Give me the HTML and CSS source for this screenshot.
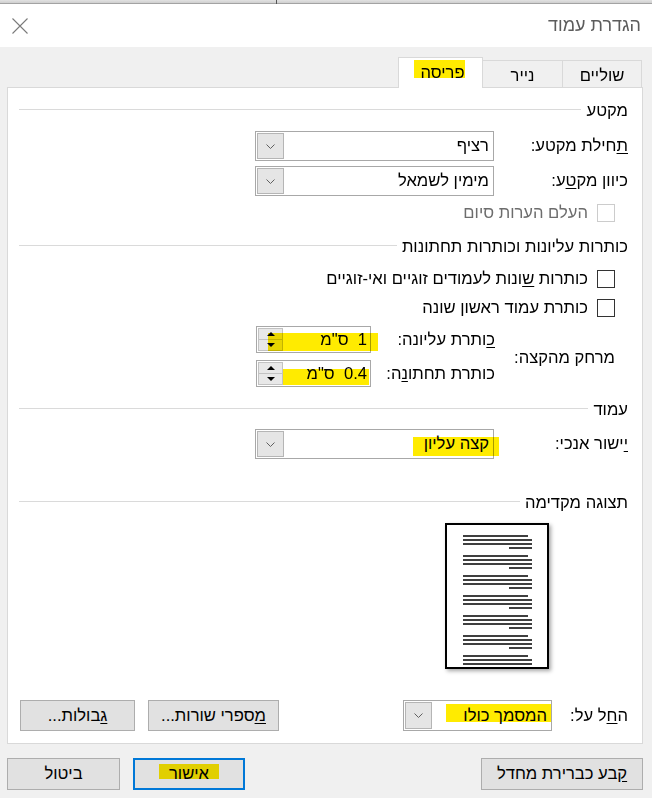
FILE: index.html
```html
<!DOCTYPE html>
<html lang="he" dir="rtl">
<head>
<meta charset="utf-8">
<title>הגדרת עמוד</title>
<link rel="stylesheet" href="styles.css">
</head>
<body>
<div class="topstrip"><span class="tick"></span></div>
<div class="titlebar">
  <span class="title">הגדרת עמוד</span>
  <svg class="close" width="16" height="16" viewBox="0 0 16 16"><path d="M0.5 0.5L15.5 15.5M15.5 0.5L0.5 15.5" stroke="#7a7a7a" stroke-width="1.1" fill="none"/></svg>
</div>
<div class="tabs">
  <div class="tab t1">שוליים</div>
  <div class="tab t2">נייר</div>
  <div class="tab active">פריסה<span class="hl hl-tab"></span></div>
</div>
<div class="panel">
  <div class="heading hd1"><span>מקטע</span><i class="rule"></i></div>
  <div class="frow r1">
    <span class="flabel"><u>ת</u>חילת מקטע:</span>
    <div class="select wide"><span class="value">רציף</span><span class="dd"><svg width="9" height="5" viewBox="0 0 9 5"><path d="M0.5 0.5L4.5 4.5L8.5 0.5" stroke="#606060" fill="none"/></svg></span></div>
  </div>
  <div class="frow r2">
    <span class="flabel">כיוון מק<u>ט</u>ע:</span>
    <div class="select wide"><span class="value">מימין לשמאל</span><span class="dd"><svg width="9" height="5" viewBox="0 0 9 5"><path d="M0.5 0.5L4.5 4.5L8.5 0.5" stroke="#606060" fill="none"/></svg></span></div>
  </div>
  <div class="cbrow c0"><span class="cb disabled"></span><span class="dis">העלם הערות סיום</span></div>

  <div class="heading hd2"><span>כותרות עליונות וכותרות תחתונות</span><i class="rule"></i></div>
  <div class="cbrow c1"><span class="cb"></span><span>כותרות <u>ש</u>ונות לעמודים זוגיים ואי-זוגיים</span></div>
  <div class="cbrow c2"><span class="cb"></span><span>כותרת עמוד ראשו<u>ן</u> שונה</span></div>
  <div class="dist">
    <span class="dist-label">מרחק מהקצה:</span>
    <div class="dist-rows">
      <div class="srow">
        <span class="slabel"><u>כ</u>ותרת עליונה:</span>
        <div class="spin"><span class="svalue">1&nbsp; ס"מ</span><span class="sbtns"><span class="sbtn"><i class="up"></i></span><span class="sbtn"><i class="down"></i></span></span><span class="hl hl-s1"></span></div>
      </div>
      <div class="srow">
        <span class="slabel">כותרת תחתו<u>נ</u>ה:</span>
        <div class="spin"><span class="svalue">0.4&nbsp; ס"מ</span><span class="sbtns"><span class="sbtn"><i class="up"></i></span><span class="sbtn"><i class="down"></i></span></span><span class="hl hl-s2"></span></div>
      </div>
    </div>
  </div>

  <div class="heading hd3"><span>עמוד</span><i class="rule"></i></div>
  <div class="frow r3">
    <span class="flabel"><u>י</u>ישור אנכי:</span>
    <div class="select wide"><span class="value">קצה עליון</span><span class="dd"><svg width="9" height="5" viewBox="0 0 9 5"><path d="M0.5 0.5L4.5 4.5L8.5 0.5" stroke="#606060" fill="none"/></svg></span><span class="hl hl-v"></span></div>
  </div>

  <div class="heading hd4"><span>תצוגה מקדימה</span><i class="rule"></i></div>
  <div class="page">
    <svg width="100" height="142" viewBox="0 0 100 142">
      <g stroke="#000" stroke-width="1.7">
        <path d="M16 11H81M16 15H85M16 19H85M62 23H85"/>
        <path d="M16 31H81M16 35H85M16 39H85M62 43H85"/>
        <path d="M16 51H81M16 55H85M16 59H85M62 63H85"/>
        <path d="M16 71H81M16 75H85M16 79H85M62 83H85"/>
        <path d="M16 91H81M16 95H85M16 99H85M62 103H85"/>
        <path d="M16 111H81M16 115H85M16 119H85M62 123H85"/>
        <path d="M16 131H81M16 135H85M16 139H85"/>
      </g>
    </svg>
  </div>

  <div class="applyrow">
    <span class="alabel">ה<u>ח</u>ל על:</span>
    <div class="select apply"><span class="value">המסמך כולו</span><span class="dd"><svg width="9" height="5" viewBox="0 0 9 5"><path d="M0.5 0.5L4.5 4.5L8.5 0.5" stroke="#606060" fill="none"/></svg></span><span class="hl hl-a"></span></div>
    <div class="pbtns">
      <span class="btn b-lines"><u>מ</u>ספרי שורות...</span>
      <span class="btn b-borders"><u>ג</u>בולות...</span>
    </div>
  </div>
</div>
<div class="footer">
  <span class="btn f-default"><u>ק</u>בע כברירת מחדל</span>
  <span class="btn f-ok">אישור<span class="hl hl-ok"></span></span>
  <span class="btn f-cancel">ביטול</span>
</div>
</body>
</html>
```

FILE: styles.css
```css
* { box-sizing: border-box; }
html, body { margin: 0; padding: 0; }
body {
  width: 652px;
  height: 798px;
  overflow: hidden;
  background: #f0f0f0;
  font-family: "Liberation Sans", "DejaVu Sans", sans-serif;
  font-size: 16.6px;
  color: #000;
}
u { text-underline-offset: 2px; }

.topstrip {
  height: 4px;
  background: linear-gradient(#e2e2e2, #cfcfcf);
  border-bottom: 1px solid #a3a3a3;
  position: relative;
}
.tick {
  position: absolute;
  left: 276px;
  top: 0;
  width: 1px;
  height: 4px;
  background: #555;
}
.titlebar {
  height: 43px;
  background: #fff;
  display: flex;
  align-items: center;
  justify-content: space-between;
  padding: 0 11px 0 12px;
}
.title { color: #5c5c5c; font-size: 18px; }
.close { display: block; }

.tabs {
  height: 40px;
  display: flex;
  align-items: flex-end;
  padding-right: 10px;
  position: relative;
  z-index: 1;
}
.tab {
  height: 27px;
  border: 1px solid #d9d9d9;
  border-bottom: none;
  background: #f0f0f0;
  display: flex;
  align-items: center;
  justify-content: center;
  margin-left: -1px;
  padding-top: 3px;
}
.t1 { width: 80px; }
.t2 { width: 81px; }
.tab.active {
  width: 85px;
  height: 31px;
  margin-bottom: -1px;
  background: #fff;
  position: relative;
  padding-top: 0;
  padding-left: 4px;
}

.hl {
  position: absolute;
  background: #ffeb00;
  mix-blend-mode: multiply;
  pointer-events: none;
}
.hl-tab { left: 15px; top: 2px; width: 51px; height: 18px; }

.panel {
  margin: 0 9px 0 7px;
  height: 657px;
  border: 1px solid #d9d9d9;
  background: #fff;
  padding: 0 14px 0 11px;
  display: flex;
  flex-direction: column;
}
.heading {
  display: flex;
  align-items: center;
  height: 20px;
}
.rule {
  flex: 1;
  height: 1px;
  background: #dadada;
  margin-right: 5px;
  margin-bottom: 3px;
}
.hd1 { margin-top: 13px; }
.hd2 { margin-top: 14px; }
.hd3 { margin-top: 13px; }
.hd4 { margin-top: 34px; }

.frow { display: flex; align-items: center; height: 30px; }
.r1 { margin-top: 10px; }
.r2 { margin-top: 5px; }
.r3 { margin-top: 9px; }
.flabel { width: 134px; }

.select {
  height: 30px;
  border: 1px solid #a8a8a8;
  background: #fff;
  display: flex;
  align-items: center;
  padding: 1px;
  position: relative;
}
.select.wide { width: 239px; }
.value { flex: 1; padding-right: 3px; }
.dd {
  width: 27px;
  height: 100%;
  background: #e5e5e5;
  border: 1px solid #b5b5b5;
  display: flex;
  align-items: center;
  justify-content: center;
}
.dd svg { display: block; }
.hl-v { right: -6px; top: 7px; width: 86px; height: 19px; }

.cbrow { display: flex; align-items: center; height: 20px; padding-right: 13px; gap: 9px; }
.c0 { margin-top: 7px; }
.c1 { margin-top: 12px; }
.c2 { margin-top: 9px; }
.cb { width: 18px; height: 18px; border: 1px solid #333; background: #fff; }
.cb.disabled { border-color: #cccccc; }
.dis { color: #6d6d6d; }

.dist { display: flex; align-items: center; padding-right: 13px; margin-top: 8px; }
.dist-label { width: 120px; padding-top: 3px; }
.dist-rows { display: flex; flex-direction: column; gap: 7px; }
.srow { display: flex; align-items: center; height: 27px; }
.slabel { width: 124px; }
.spin {
  width: 115px;
  height: 27px;
  border: 1px solid #a8a8a8;
  display: flex;
  padding: 1px;
  position: relative;
}
.svalue { flex: 1; display: flex; align-items: center; padding-right: 2px; }
.sbtns { width: 25px; display: flex; flex-direction: column; }
.sbtn {
  flex: 1;
  background: #e8e8e8;
  border: 1px solid #c2c2c2;
  display: flex;
  align-items: center;
  justify-content: center;
}
.sbtn + .sbtn { border-top: none; }
.up, .down { width: 0; height: 0; border-left: 4px solid transparent; border-right: 4px solid transparent; }
.up { border-bottom: 4px solid #000; }
.down { border-top: 4px solid #000; }
.hl-s1 { left: 11px; top: 6px; width: 110px; height: 18px; }
.hl-s2 { left: 26px; top: 8px; width: 86px; height: 16px; }

.page {
  margin-top: 10px;
  margin-right: 79px;
  align-self: flex-start;
  width: 104px;
  height: 146px;
  border: 2px solid #000;
  background: #fff;
  box-shadow: 2px 2px 4px rgba(0, 0, 0, 0.35);
}
.page svg { display: block; }

.applyrow { display: flex; align-items: center; height: 31px; margin-top: 31px; }
.alabel { width: 76px; }
.select.apply { width: 149px; height: 31px; }
.hl-a { right: 0; top: 3px; width: 105px; height: 18px; }
.pbtns { display: flex; gap: 13px; margin-right: auto; margin-left: 1px; }

.btn {
  height: 31px;
  border: 1px solid #adadad;
  background: #e1e1e1;
  display: flex;
  align-items: center;
  justify-content: center;
  position: relative;
}
.b-lines { width: 131px; }
.b-borders { width: 115px; }

.footer { display: flex; padding: 14px 9px 0 7px; }
.footer .btn { height: 32px; }
.f-default { width: 162px; }
.f-ok { width: 112px; margin-right: auto; border: 2px solid #0078d7; }
.f-cancel { width: 113px; margin-right: 13px; }
.hl-ok { left: 24px; top: 4px; width: 60px; height: 15px; }
```
